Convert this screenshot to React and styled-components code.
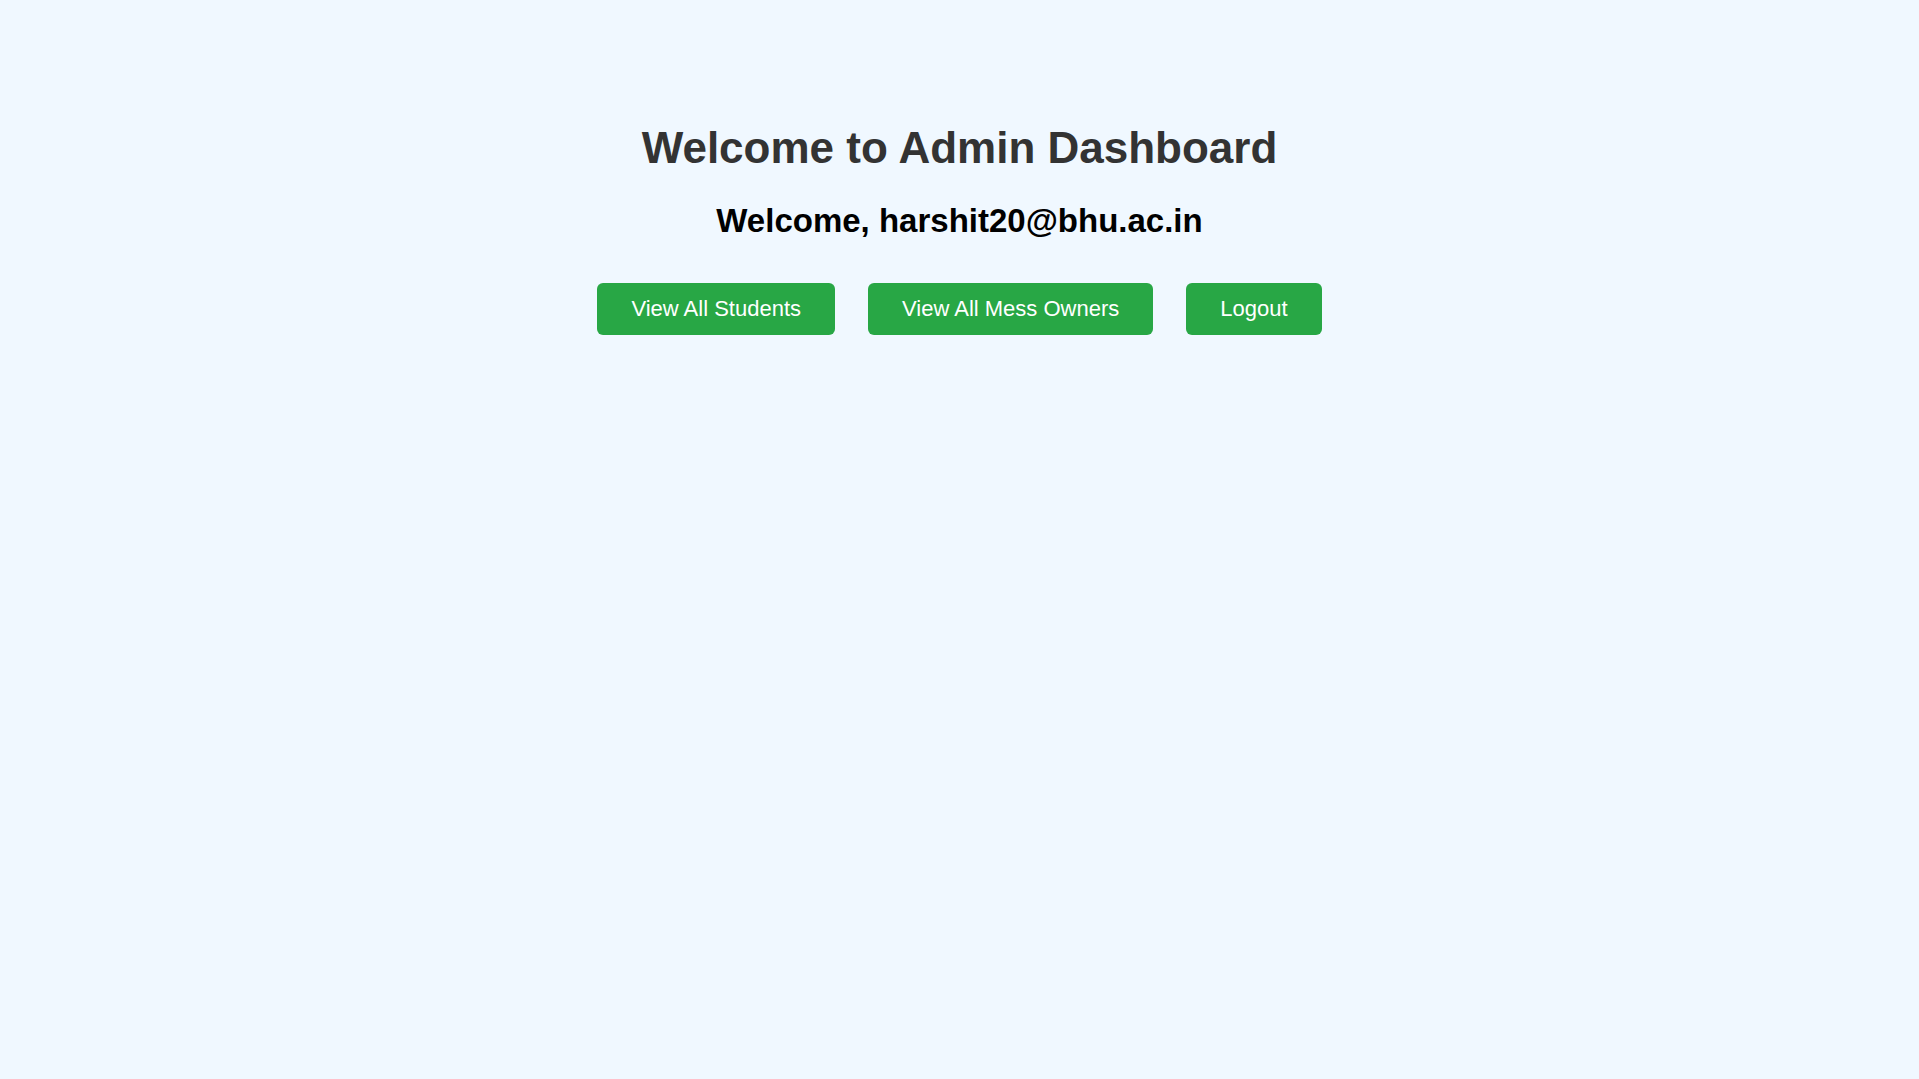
import React from 'react';
import styled, { createGlobalStyle } from 'styled-components';

const GlobalStyle = createGlobalStyle`
  html, body {
    margin: 0;
    padding: 0;
    background-color: #f0f8ff;
    font-family: "Liberation Sans", Arial, sans-serif;
  }
`;

const AdminDashboard = () => {
  const email = 'harshit20@bhu.ac.in';

  return (
    <Page>
      <GlobalStyle />
      <Title>Welcome to Admin Dashboard</Title>
      <Greeting>Welcome, {email}</Greeting>
      <ButtonRow>
        <ActionButton>View All Students</ActionButton>
        <ActionButton>View All Mess Owners</ActionButton>
        <ActionButton>Logout</ActionButton>
      </ButtonRow>
    </Page>
  );
};

export default AdminDashboard;

// Styled-components
const Page = styled.div`
  min-height: 100vh;
  box-sizing: border-box;
  padding-top: 123px;
  display: flex;
  flex-direction: column;
  align-items: center;
  background-color: #f0f8ff;
`;

const Title = styled.h1`
  margin: 0 0 29px;
  font-size: 44px;
  font-weight: bold;
  color: #333333;
`;

const Greeting = styled.h2`
  margin: 0 0 43px;
  font-size: 33px;
  font-weight: bold;
  color: #000000;
`;

const ButtonRow = styled.div`
  display: flex;
  gap: 33px;
`;

const ActionButton = styled.button`
  background-color: #28a745;
  color: white;
  border: none;
  padding: 13px 34px;
  font-family: "Liberation Sans", Arial, sans-serif;
  font-size: 22px;
  border-radius: 6px;
  cursor: pointer;
`;
